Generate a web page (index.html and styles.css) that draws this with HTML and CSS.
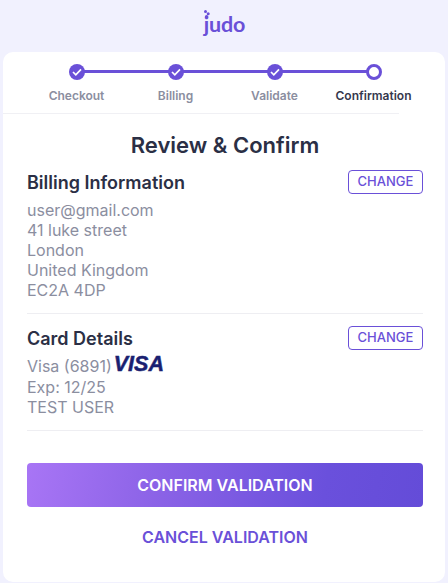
FILE: index.html
```html
<!DOCTYPE html>
<html lang="en">
<head>
<meta charset="utf-8">
<title>Review &amp; Confirm</title>
<link rel="stylesheet" href="styles.css">
</head>
<body>
<header class="top">
  <div class="logo">
    <svg class="logo-dots" width="9" height="11" viewBox="0 0 9 11"><circle cx="2.5" cy="1.6" r="1.5"/><circle cx="5.2" cy="3.8" r="1.5"/><circle cx="3.6" cy="6.7" r="1.7"/></svg>
    <span class="logo-text">judo</span>
  </div>
</header>
<main class="card">
  <ol class="stepper">
    <li class="step done">
      <span class="dot"><svg width="10" height="8" viewBox="0 0 10 8"><path d="M1 4l2.8 2.8L9 1.3" fill="none" stroke="#fff" stroke-width="1.7"/></svg></span>
      <span class="label">Checkout</span>
    </li>
    <li class="step done">
      <span class="dot"><svg width="10" height="8" viewBox="0 0 10 8"><path d="M1 4l2.8 2.8L9 1.3" fill="none" stroke="#fff" stroke-width="1.7"/></svg></span>
      <span class="label">Billing</span>
    </li>
    <li class="step done">
      <span class="dot"><svg width="10" height="8" viewBox="0 0 10 8"><path d="M1 4l2.8 2.8L9 1.3" fill="none" stroke="#fff" stroke-width="1.7"/></svg></span>
      <span class="label">Validate</span>
    </li>
    <li class="step current">
      <span class="dot"></span>
      <span class="label">Confirmation</span>
    </li>
  </ol>
  <div class="stepper-rule"></div>
  <h1 class="title">Review &amp; Confirm</h1>
  <section class="block billing">
    <div class="block-head">
      <h2>Billing Information</h2>
      <button class="change">CHANGE</button>
    </div>
    <p class="line">user@gmail.com</p>
    <p class="line">41 luke street</p>
    <p class="line">London</p>
    <p class="line">United Kingdom</p>
    <p class="line">EC2A 4DP</p>
  </section>
  <section class="block cardinfo">
    <div class="block-head">
      <h2>Card Details</h2>
      <button class="change">CHANGE</button>
    </div>
    <p class="line visa-line">Visa (6891)<span class="visa">VISA</span></p>
    <p class="line">Exp: 12/25</p>
    <p class="line">TEST USER</p>
  </section>
  <button class="confirm">CONFIRM VALIDATION</button>
  <button class="cancel">CANCEL VALIDATION</button>
</main>
</body>
</html>
```
FILE: styles.css
```css
* { box-sizing: border-box; }
html, body { margin: 0; padding: 0; }
body {
  width: 448px;
  height: 583px;
  overflow: hidden;
  background: #f1f1fe;
  font-family: Inter, "Liberation Sans", sans-serif;
  color: #2b2f45;
}
.top {
  height: 52px;
  display: flex;
  justify-content: center;
  align-items: flex-start;
}
.logo {
  position: relative;
  margin-top: 10px;
  padding-left: 1px;
  color: #6a50d8;
}
.logo-dots {
  position: absolute;
  left: 0;
  top: 0;
  fill: #6a50d8;
}
.logo-text {
  display: block;
  font-family: Lato, sans-serif;
  font-weight: 700;
  font-size: 21.5px;
  line-height: 28px;
  letter-spacing: -0.2px;
}
.card {
  margin: 0 3px;
  height: 530px;
  background: #fff;
  border-radius: 10px;
  padding-top: 12px;
}
.stepper {
  list-style: none;
  margin: 0;
  padding: 0 24px;
  display: grid;
  grid-template-columns: repeat(4, 99px);
}
.step {
  position: relative;
  display: flex;
  flex-direction: column;
  align-items: center;
}
.step:not(:last-child)::after {
  content: "";
  position: absolute;
  top: 6px;
  left: 50%;
  width: 100%;
  height: 3px;
  background: #6a50d8;
}
.dot {
  position: relative;
  z-index: 1;
  width: 16px;
  height: 16px;
  border-radius: 50%;
  background: #6a50d8;
  display: flex;
  align-items: center;
  justify-content: center;
}
.current .dot {
  background: #fff;
  border: 3px solid #6a50d8;
}
.label {
  margin-top: 9px;
  font-size: 12px;
  line-height: 14px;
  font-weight: 600;
  color: #8b8e9f;
  white-space: nowrap;
}
.current .label { color: #35384d; }
.stepper-rule {
  margin-top: 10px;
  width: 396px;
  height: 1px;
  background: #f0f0f4;
}
.title {
  margin: 17px 0 0;
  padding-left: 2px;
  font-size: 22px;
  line-height: 28px;
  font-weight: 600;
  text-align: center;
  color: #2b2f45;
}
.block {
  margin: 0 22px 0 24px;
  border-bottom: 1px solid #eeeef2;
}
.billing { margin-top: 12px; padding-bottom: 13px; }
.cardinfo { padding-top: 13px; padding-bottom: 13px; }
.block-head {
  display: flex;
  justify-content: space-between;
  align-items: flex-start;
  margin-bottom: 5px;
}
.cardinfo .block-head { margin-bottom: 4px; }
.block-head h2 {
  margin: 0;
  font-size: 18px;
  line-height: 24px;
  font-weight: 600;
  color: #2b2f45;
}
.change {
  width: 75px;
  height: 24px;
  margin-top: -1px;
  padding: 0 0 2px;
  border: 1px solid #6a50d8;
  border-radius: 4px;
  background: #fff;
  color: #6a50d8;
  font-family: inherit;
  font-size: 13px;
  font-weight: 500;
}
.line {
  margin: 0;
  font-size: 16px;
  line-height: 20px;
  color: #8b8e9f;
}
.visa-line { display: flex; align-items: center; height: 22px; }
.visa {
  margin-left: 2px;
  margin-top: -5px;
  font-family: "Liberation Sans", sans-serif;
  font-style: italic;
  font-weight: 700;
  font-size: 21.5px;
  line-height: 20px;
  -webkit-text-stroke: 0.5px #1a1f71;
  color: #1a1f71;
}
.confirm {
  display: block;
  width: 396px;
  height: 44px;
  margin: 32px 24px 0;
  border: 0;
  border-radius: 4px;
  background: linear-gradient(100deg, #a875f5 0%, #8a62e6 35%, #6a50dc 75%, #644cd8 100%);
  color: #fff;
  font-family: inherit;
  font-size: 16px;
  font-weight: 600;
}
.cancel {
  display: block;
  width: 396px;
  height: 44px;
  margin: 8px 24px 0;
  border: 0;
  background: none;
  color: #6a50d8;
  font-family: inherit;
  font-size: 16px;
  font-weight: 600;
}
```
